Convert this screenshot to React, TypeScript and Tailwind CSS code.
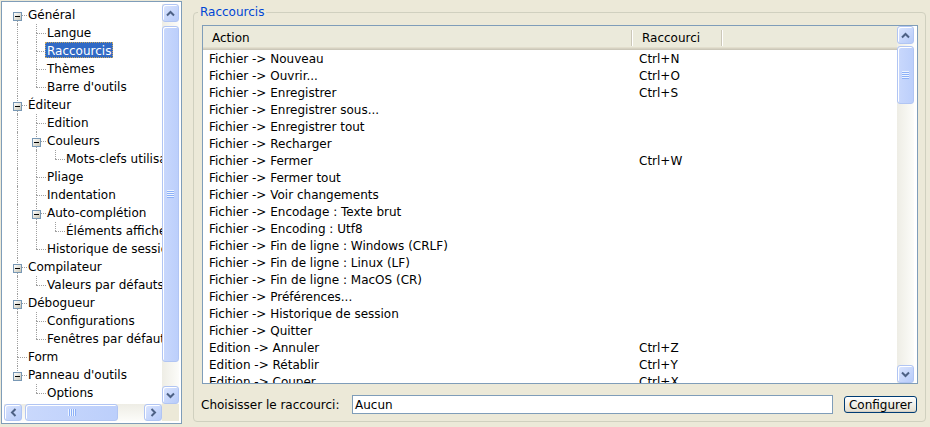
import React from "react";

type TNode = { label: string; children?: TNode[]; selected?: boolean };

const TREE: TNode[] = [
  {
    label: "Général",
    children: [
      { label: "Langue" },
      { label: "Raccourcis", selected: true },
      { label: "Thèmes" },
      { label: "Barre d'outils" },
    ],
  },
  {
    label: "Éditeur",
    children: [
      { label: "Edition" },
      { label: "Couleurs", children: [{ label: "Mots-clefs utilisateur" }] },
      { label: "Pliage" },
      { label: "Indentation" },
      { label: "Auto-complétion", children: [{ label: "Éléments affichés" }] },
      { label: "Historique de session" },
    ],
  },
  { label: "Compilateur", children: [{ label: "Valeurs par défauts" }] },
  {
    label: "Débogueur",
    children: [{ label: "Configurations" }, { label: "Fenêtres par défaut" }],
  },
  { label: "Form" },
  { label: "Panneau d'outils", children: [{ label: "Options" }] },
];

type Row = {
  label: string;
  ancestors: boolean[];
  last: boolean;
  first: boolean;
  box: boolean;
  selected: boolean;
};

function flatten(nodes: TNode[], ancestors: boolean[], out: Row[], root: boolean) {
  nodes.forEach((n, i) => {
    const last = i === nodes.length - 1;
    out.push({
      label: n.label,
      ancestors,
      last,
      first: root && i === 0,
      box: !!n.children,
      selected: !!n.selected,
    });
    if (n.children) flatten(n.children, [...ancestors, !last], out, false);
  });
  return out;
}

const ROWS = flatten(TREE, [], [], true);

const SHORTCUTS: [string, string][] = [
  ["Fichier -> Nouveau", "Ctrl+N"],
  ["Fichier -> Ouvrir...", "Ctrl+O"],
  ["Fichier -> Enregistrer", "Ctrl+S"],
  ["Fichier -> Enregistrer sous...", ""],
  ["Fichier -> Enregistrer tout", ""],
  ["Fichier -> Recharger", ""],
  ["Fichier -> Fermer", "Ctrl+W"],
  ["Fichier -> Fermer tout", ""],
  ["Fichier -> Voir changements", ""],
  ["Fichier -> Encodage : Texte brut", ""],
  ["Fichier -> Encoding : Utf8", ""],
  ["Fichier -> Fin de ligne : Windows (CRLF)", ""],
  ["Fichier -> Fin de ligne : Linux (LF)", ""],
  ["Fichier -> Fin de ligne : MacOS (CR)", ""],
  ["Fichier -> Préférences...", ""],
  ["Fichier -> Historique de session", ""],
  ["Fichier -> Quitter", ""],
  ["Edition -> Annuler", "Ctrl+Z"],
  ["Edition -> Rétablir", "Ctrl+Y"],
  ["Edition -> Couper", "Ctrl+X"],
];

function Arrow({ dir }: { dir: "up" | "down" | "left" | "right" }) {
  const cls =
    dir === "up" ? "" : dir === "down" ? "rotate-180" : dir === "left" ? "-rotate-90" : "rotate-90";
  return (
    <svg width="9" height="9" viewBox="0 0 9 9" className={cls}>
      <path d="M1 6.5 L4.5 3 L8 6.5" fill="none" stroke="#4d6185" strokeWidth="2" />
    </svg>
  );
}

function SButton({ dir }: { dir: "up" | "down" | "left" | "right" }) {
  const size = dir === "up" || dir === "down" ? "h-[18px] w-[17px]" : "h-[17px] w-[18px]";
  return (
    <div
      className={
        size +
        " flex shrink-0 items-center justify-center rounded-[3px] border border-[#b1c5f3] bg-gradient-to-br from-[#dbe5fe] to-[#b7cbf9] shadow-[inset_1px_1px_0_#ffffff]"
      }
    >
      <Arrow dir={dir} />
    </div>
  );
}

function GripV() {
  return (
    <div className="flex flex-col">
      <div className="h-[2px] w-[7px] border-t border-b border-t-[#eef4fe] border-b-[#8cb0f8]" />
      <div className="h-[2px] w-[7px] border-t border-b border-t-[#eef4fe] border-b-[#8cb0f8]" />
      <div className="h-[2px] w-[7px] border-t border-b border-t-[#eef4fe] border-b-[#8cb0f8]" />
      <div className="h-[2px] w-[7px] border-t border-b border-t-[#eef4fe] border-b-[#8cb0f8]" />
    </div>
  );
}

function GripH() {
  return (
    <div className="flex">
      <div className="h-[7px] w-[2px] border-l border-r border-l-[#eef4fe] border-r-[#8cb0f8]" />
      <div className="h-[7px] w-[2px] border-l border-r border-l-[#eef4fe] border-r-[#8cb0f8]" />
      <div className="h-[7px] w-[2px] border-l border-r border-l-[#eef4fe] border-r-[#8cb0f8]" />
      <div className="h-[7px] w-[2px] border-l border-r border-l-[#eef4fe] border-r-[#8cb0f8]" />
    </div>
  );
}

const thumbCls =
  "flex shrink-0 items-center justify-center rounded-[3px] border border-[#b1c5f3] bg-gradient-to-r from-[#c9d8fc] to-[#bccffb] shadow-[inset_1px_1px_0_#ffffff]";

function TreeRow({ r }: { r: Row }) {
  return (
    <div className="flex h-[18px] items-center whitespace-nowrap">
      {r.ancestors.map((cont, i) => (
        <div key={i} className="relative h-full w-[19px] shrink-0">
          {cont && (
            <div className="absolute left-[9px] top-0 h-full border-l border-dotted border-[#a0a0a0]" />
          )}
        </div>
      ))}
      <div className="relative h-full w-[19px] shrink-0">
        {!r.first && (
          <div className="absolute left-[9px] top-0 h-[9px] border-l border-dotted border-[#a0a0a0]" />
        )}
        {!r.last && (
          <div className="absolute left-[9px] top-[9px] h-[9px] border-l border-dotted border-[#a0a0a0]" />
        )}
        <div className="absolute left-[9px] top-[9px] w-[10px] border-t border-dotted border-[#a0a0a0]" />
        {r.box && (
          <div className="absolute left-[5px] top-[6px] flex h-[9px] w-[9px] items-center justify-center border border-[#7898b5] bg-gradient-to-br from-white to-[#c8c5b5]">
            <div className="h-px w-[5px] bg-black" />
          </div>
        )}
      </div>
      <span
        className={
          r.selected
            ? "-ml-[1px] mb-[2px] h-[16px] bg-[#316ac5] px-[2px] leading-[16px] text-white outline-1 outline-dotted -outline-offset-1 outline-[#c8a860]"
            : "-ml-[1px] mb-[2px] h-[16px] px-[2px] leading-[16px]"
        }
      >
        <span className="relative top-[1px]">{r.label}</span>
      </span>
    </div>
  );
}

function TreePanel() {
  return (
    <div className="ml-[1px] mt-[1px] flex h-[423px] w-[181px] shrink-0 flex-col border border-[#7f9db9] bg-white p-[2px]">
      <div className="flex min-h-0 flex-1">
        <div className="min-w-0 flex-1 overflow-hidden pl-[4px] pt-[2px]">
          {ROWS.map((r, i) => (
            <TreeRow key={i} r={r} />
          ))}
        </div>
        <div className="flex w-[17px] shrink-0 flex-col bg-gradient-to-r from-[#eeede5] to-[#fcfcf9]">
          <SButton dir="up" />
          <div className="h-[4px] shrink-0" />
          <div className={thumbCls + " h-[336px]"}>
            <GripV />
          </div>
          <div className="flex-1" />
          <SButton dir="down" />
        </div>
      </div>
      <div className="flex h-[17px] shrink-0">
        <div className="flex flex-1 bg-gradient-to-b from-[#eeede5] to-[#fcfcf9]">
          <SButton dir="left" />
          <div className="w-[3px] shrink-0" />
          <div className={thumbCls + " w-[93px]"}>
            <GripH />
          </div>
          <div className="flex-1" />
          <SButton dir="right" />
        </div>
        <div className="w-[17px] shrink-0 bg-[#ece9d8]" />
      </div>
    </div>
  );
}

function ShortcutList() {
  return (
    <div className="mt-[6px] flex h-[359px] w-[716px] border border-[#7f9db9] bg-white">
      <div className="flex min-w-0 flex-1 flex-col overflow-hidden">
        <div className="flex h-[24px] shrink-0 bg-[#ebeadb] shadow-[inset_0_-1px_0_#cbc7b8,inset_0_-2px_0_#d6d2c2,inset_0_-3px_0_#e2decd]">
          <div className="relative flex w-[430px] shrink-0 items-center pl-[9px]">
            Action
            <div className="absolute right-0 top-[4px] h-[16px] w-[2px] border-l border-r border-l-[#cbc7b8] border-r-white" />
          </div>
          <div className="relative flex w-[90px] shrink-0 items-center pl-[9px]">
            Raccourci
            <div className="absolute right-0 top-[4px] h-[16px] w-[2px] border-l border-r border-l-[#cbc7b8] border-r-white" />
          </div>
        </div>
        <div className="min-h-0 flex-1 overflow-hidden">
          {SHORTCUTS.map(([a, s], i) => (
            <div key={i} className="flex h-[17px] items-center whitespace-nowrap">
              <div className="w-[430px] shrink-0 pl-[6px]">{a}</div>
              <div className="pl-[6px]">{s}</div>
            </div>
          ))}
        </div>
      </div>
      <div className="mr-[3px] flex w-[17px] shrink-0 flex-col bg-gradient-to-r from-[#eeede5] to-[#fcfcf9]">
        <SButton dir="up" />
        <div className="h-[2px] shrink-0" />
        <div className={thumbCls + " h-[58px]"}>
          <GripV />
        </div>
        <div className="flex-1" />
        <SButton dir="down" />
      </div>
    </div>
  );
}

export default function App() {
  return (
    <div className="flex h-[427px] w-[930px] overflow-hidden bg-[#ece9d8] font-['DejaVu_Sans',sans-serif] text-[12px] leading-none text-black">
      <TreePanel />
      <fieldset className="ml-[11px] mt-[5px] h-[417px] w-[733px] min-w-0 shrink-0 rounded-[4px] border border-[#d0d0bf] px-[8px] pb-0">
        <legend className="-ml-[4px] px-[2px] leading-[14px] text-[#0046d5]">Raccourcis</legend>
        <ShortcutList />
        <div className="mt-[11px] flex items-start">
          <div className="-ml-[1px] w-[151px] shrink-0 whitespace-nowrap pt-[4px]">Choisisser le raccourci:</div>
          <div className="h-[19px] w-[481px] shrink-0 border border-[#7f9db9] bg-white pl-[2px] leading-[18px]">
            Aucun
          </div>
          <div className="ml-[11px] mt-[1px] flex h-[17px] w-[73px] shrink-0 items-center justify-center rounded-[3px] border border-[#003c74] bg-gradient-to-b from-white to-[#e2ded0] shadow-[inset_0_-1px_0_#d6d0c5]">
            Configurer
          </div>
        </div>
      </fieldset>
    </div>
  );
}
